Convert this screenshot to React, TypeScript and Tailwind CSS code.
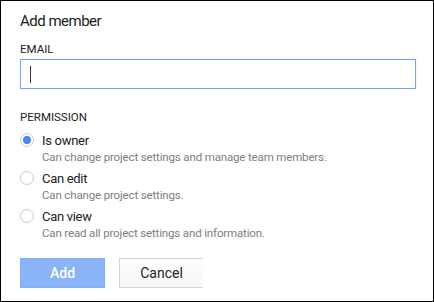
import { useState } from "react";

const options = [
  { id: "owner", label: "Is owner", desc: "Can change project settings and manage team members." },
  { id: "edit", label: "Can edit", desc: "Can change project settings." },
  { id: "view", label: "Can view", desc: "Can read all project settings and information." },
];

export default function App() {
  const [perm, setPerm] = useState("owner");

  return (
    <div className="w-[434px] h-[302px] border border-black bg-white pl-[19px] pt-[10px] font-['Roboto',sans-serif] text-[#212121] overflow-hidden">
      <h1 className="text-[15px] leading-[20px] tracking-[-0.5px]">Add member</h1>

      <label className="block mt-[11px] mb-[3px] text-[11.5px] leading-[14px] uppercase">Email</label>
      <div className="w-[396px] h-[30px] border border-[#74a3f7] shadow-[0_0_1px_#a9c7fb] flex items-center pl-[9px]">
        <span className="w-px h-[17px] bg-[#333]" />
      </div>

      <p className="mt-[21px] text-[11.5px] leading-[14px] uppercase">Permission</p>

      <div className="mt-[8px] flex flex-col gap-[6px]">
        {options.map(o => (
          <div key={o.id} className="flex gap-[8px] cursor-pointer" onClick={() => setPerm(o.id)}>
            <span className="mt-[1px] w-[14px] h-[14px] rounded-full border border-[#c9c9c9] bg-white flex items-center justify-center shrink-0">
              {perm === o.id && <span className="w-[8px] h-[8px] rounded-full bg-[#4a86f2]" />}
            </span>
            <div>
              <div className="text-[13px] leading-[18px] tracking-[-0.3px] text-[#222]">{o.label}</div>
              <div className="text-[11.5px] leading-[14px] tracking-[-0.15px] text-[#7e7e7e]">{o.desc}</div>
            </div>
          </div>
        ))}
      </div>

      <div className="mt-[18px] flex gap-[14px]">
        <button className="w-[85px] h-[30px] bg-[#8ab3f8] border border-[#84adf6] text-white text-[14px] font-medium">Add</button>
        <button className="w-[84px] h-[30px] bg-gradient-to-b from-white to-[#f6f6f6] border border-r-0 border-[#d6d6d6] text-[#222] text-[14px]">Cancel</button>
      </div>
    </div>
  );
}
